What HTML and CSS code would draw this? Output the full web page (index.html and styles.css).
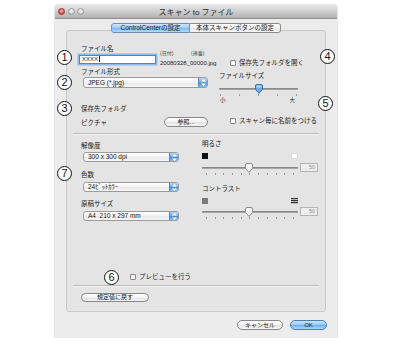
FILE: index.html
```html
<!DOCTYPE html>
<html lang="ja">
<head>
    <meta charset="UTF-8">
    <meta name="viewport" content="width=device-width, initial-scale=1.0">
    <title>スキャン to ファイル</title>
    <link rel="stylesheet" href="styles.css">
</head>
<body>
    <div class="window">
        <div class="titlebar">
            <div class="lights">
                <span class="light red"></span><span class="light"></span><span class="light"></span>
            </div>
            <div class="title">スキャン to ファイル</div>
        </div>

        <div class="tabs">
            <span class="tab selected">ControlCenterの設定</span><span class="tab other">本体スキャンボタンの設定</span>
        </div>

        <div class="group">
            <!-- ファイル名 / 形式 / 保存先 -->
            <div class="sec-top">
                <div class="row-name">
                    <div class="col-name">
                        <div class="label">ファイル名</div>
                        <div class="textfield">XXXX<span class="caret"></span></div>
                    </div>
                    <div class="col-suffix">
                        <div class="hint"><span>(日付)</span><span>(連番)</span></div>
                        <div class="fname">20080328_00000.jpg</div>
                    </div>
                    <div class="check"><span class="box"></span>保存先フォルダを開く</div>
                </div>

                <div class="row-format">
                    <div class="left">
                        <div class="label">ファイル形式</div>
                        <div class="popup wide">
                            <span class="popup-text">JPEG (*.jpg)</span>
                            <span class="popup-arrows"><svg width="5" height="7" viewBox="0 0 5 7"><path d="M2.5 0 L5 2.6 H0 Z M2.5 7 L5 4.4 H0 Z" fill="#fff"/></svg></span>
                        </div>
                    </div>
                    <div class="right">
                        <div class="label">ファイルサイズ</div>
                        <div class="slider">
                            <span class="knob" style="left: 51%"><svg width="9" height="10" viewBox="0 0 9 10"><path d="M1 2 Q1 0.5 2.5 0.5 H6.5 Q8 0.5 8 2 V5.5 L4.5 9.3 L1 5.5 Z" fill="#6ea9ea" stroke="#3e6ea6" stroke-width="1"/><path d="M2 1.5 H7 V3.5 H2 Z" fill="#cfe4fb" opacity="0.8"/></svg></span>
                        </div>
                        <div class="ticks"><span></span><span></span><span></span><span></span><span></span></div>
                        <div class="scale"><span>小</span><span>大</span></div>
                    </div>
                </div>

                <div class="row-folder">
                    <div class="left">
                        <div class="label">保存先フォルダ</div>
                        <div class="pick-row">
                            <span class="label">ピクチャ</span>
                            <span class="btn browse">参照...</span>
                        </div>
                    </div>
                    <div class="right">
                        <div class="check"><span class="box"></span>スキャン毎に名前をつける</div>
                    </div>
                </div>
            </div>

            <div class="sep"></div>

            <!-- 解像度 / 色数 / 原稿サイズ / 明るさ / コントラスト -->
            <div class="sec-mid">
                <div class="left">
                    <div class="label">解像度</div>
                    <div class="popup">
                        <span class="popup-text">300 x 300 dpi</span>
                        <span class="popup-arrows"><svg width="5" height="7" viewBox="0 0 5 7"><path d="M2.5 0 L5 2.6 H0 Z M2.5 7 L5 4.4 H0 Z" fill="#fff"/></svg></span>
                    </div>
                    <div class="label gap-l">色数</div>
                    <div class="popup gap-p">
                        <span class="popup-text">24ﾋﾞｯﾄｶﾗｰ</span>
                        <span class="popup-arrows"><svg width="5" height="7" viewBox="0 0 5 7"><path d="M2.5 0 L5 2.6 H0 Z M2.5 7 L5 4.4 H0 Z" fill="#fff"/></svg></span>
                    </div>
                    <div class="label gap-l2">原稿サイズ</div>
                    <div class="popup gap-p">
                        <span class="popup-text">A4&nbsp; 210 x 297 mm</span>
                        <span class="popup-arrows"><svg width="5" height="7" viewBox="0 0 5 7"><path d="M2.5 0 L5 2.6 H0 Z M2.5 7 L5 4.4 H0 Z" fill="#fff"/></svg></span>
                    </div>
                </div>

                <div class="right">
                    <div class="label">明るさ</div>
                    <div class="swatches"><span class="sw black"></span><span class="sw white"></span></div>
                    <div class="value-row">
                        <div class="slider long">
                            <span class="knob" style="left: 49%"><svg width="9" height="10" viewBox="0 0 9 10"><path d="M1 2 Q1 0.5 2.5 0.5 H6.5 Q8 0.5 8 2 V5.5 L4.5 9.3 L1 5.5 Z" fill="#f6f6f6" stroke="#8a8a8a" stroke-width="1"/></svg></span>
                        </div>
                        <span class="value">50</span>
                    </div>
                    <div class="ticks long"><span></span><span></span><span></span><span></span><span></span><span></span><span></span><span></span><span></span><span></span><span></span></div>

                    <div class="label gap-c">コントラスト</div>
                    <div class="swatches"><span class="sw grey"></span><span class="sw stripes"></span></div>
                    <div class="value-row tight">
                        <div class="slider long">
                            <span class="knob" style="left: 49%"><svg width="9" height="10" viewBox="0 0 9 10"><path d="M1 2 Q1 0.5 2.5 0.5 H6.5 Q8 0.5 8 2 V5.5 L4.5 9.3 L1 5.5 Z" fill="#f6f6f6" stroke="#8a8a8a" stroke-width="1"/></svg></span>
                        </div>
                        <span class="value">50</span>
                    </div>
                    <div class="ticks long"><span></span><span></span><span></span><span></span><span></span><span></span><span></span><span></span><span></span><span></span><span></span></div>
                </div>
            </div>

            <div class="preview">
                <div class="check"><span class="box"></span>プレビューを行う</div>
            </div>

            <div class="sep low"></div>

            <div class="reset-row">
                <span class="btn reset">規定値に戻す</span>
            </div>
        </div>

        <div class="footer">
            <span class="btn cancel">キャンセル</span>
            <span class="btn ok">OK</span>
        </div>
    </div>

    <!-- 説明用の番号 -->
    <span class="mark m1">1</span>
    <span class="mark m2">2</span>
    <span class="mark m3">3</span>
    <span class="mark m4">4</span>
    <span class="mark m5">5</span>
    <span class="mark m6">6</span>
    <span class="mark m7">7</span>
</body>
</html>
```

FILE: styles.css
```css
* {
    box-sizing: border-box;
}

body {
    margin: 0;
    padding: 5px 0 0 55px;
    background: #fff;
    font-family: "Liberation Sans", "Noto Sans CJK JP", sans-serif;
    font-size: 6.5px;
    color: #222;
}

.window {
    width: 282px;
    height: 333px;
    background: #ececec;
    box-shadow: 0 0 2px rgba(0, 0, 0, 0.35);
    border-radius: 3px 3px 0 0;
}

/* タイトルバー */
.titlebar {
    height: 14px;
    display: grid;
    grid-template-columns: 1fr auto 1fr;
    align-items: center;
    padding: 0 3px;
    background: linear-gradient(#e8e8e8, #b2b2b2);
    border-bottom: 1px solid #8e8e8e;
    border-radius: 3px 3px 0 0;
}

.lights {
    display: flex;
    gap: 2.5px;
}

.light {
    width: 7px;
    height: 7px;
    border-radius: 50%;
    border: 1px solid #9c9c9c;
    background: radial-gradient(circle at 50% 35%, #f4f4f4, #c2c2c2);
}

.light.red {
    border-color: #9b2b24;
    background: radial-gradient(circle at 50% 35%, #f6a59d, #cf3a30);
}

.title {
    font-size: 8px;
    color: #2b2b2b;
}

/* タブ */
.tabs {
    display: flex;
    justify-content: center;
    margin-top: 4px;
    position: relative;
    z-index: 1;
}

.tab {
    height: 10px;
    line-height: 8px;
    text-align: center;
    border: 1px solid #8c8c8c;
    background: linear-gradient(#ffffff, #f1f1f1 50%, #e6e6e6 51%, #f7f7f7);
    white-space: nowrap;
}

.tab.selected {
    width: 79px;
    border-radius: 3px 0 0 3px;
    border-color: #6f8fb4;
    background: linear-gradient(#d2e7fc, #9ac9f5 50%, #7db8f0 51%, #b2d9fb);
}

.tab.other {
    width: 91px;
    border-left: none;
    border-radius: 0 3px 3px 0;
}

/* グループボックス */
.group {
    margin: -3px 11px 0;
    height: 282px;
    display: flex;
    flex-direction: column;
    padding: 13px 0 9px;
    background: #e4e4e4;
    border: 1px solid #c8c8c8;
    border-radius: 3px;
}

.label {
    line-height: 9px;
    height: 9px;
    white-space: nowrap;
}

.sec-top {
    padding-left: 14px;
}

.row-name {
    display: flex;
    align-items: flex-start;
}

.col-name {
    width: 79px;
}

.textfield {
    margin: 2px 0 0 -2px;
    width: 77px;
    height: 9px;
    padding-left: 2px;
    font-size: 6px;
    line-height: 7px;
    background: #fff;
    border: 1px solid #7d7d7d;
    box-shadow: 0 0 0 1.5px #8dbaea;
}

.caret {
    display: inline-block;
    width: 1px;
    height: 6px;
    margin-left: 0.5px;
    vertical-align: -1px;
    background: #222;
}

.col-suffix {
    width: 70px;
    padding-top: 6px;
}

.hint {
    display: flex;
    font-size: 5px;
    line-height: 6px;
    color: #444;
}

.hint span {
    width: 31px;
}

.fname {
    margin-top: 3px;
    font-size: 6px;
    line-height: 8px;
    white-space: nowrap;
}

.check {
    display: flex;
    align-items: center;
    gap: 3px;
    line-height: 8px;
    white-space: nowrap;
}

.box {
    width: 6px;
    height: 6px;
    background: #fff;
    border: 1px solid #8a8a8a;
    border-radius: 1px;
    box-shadow: inset 0 1px 1px rgba(0, 0, 0, 0.1);
}

.row-name .check {
    margin-top: 15px;
}

.row-format {
    display: flex;
    height: 37px;
}

.row-format .left,
.row-folder .left {
    width: 127px;
}

.row-format .right {
    margin-left: 11px;
    width: 79px;
    padding-top: 4px;
}

/* ポップアップ */
.popup {
    display: flex;
    margin: 2px 0 0 2px;
    width: 96px;
    height: 10px;
    border: 1px solid #9a9a9a;
    border-radius: 3px;
    overflow: hidden;
    background: linear-gradient(#ffffff, #f3f3f3 50%, #e7e7e7 51%, #f7f7f7);
}

.popup.wide {
    width: 125px;
    height: 11px;
    margin-top: 1px;
}

.popup-text {
    flex: 1;
    padding-left: 4px;
    font-size: 6.5px;
    line-height: 8px;
    white-space: nowrap;
}

.popup.wide .popup-text {
    line-height: 9px;
}

.popup-arrows {
    width: 9px;
    display: flex;
    align-items: center;
    justify-content: center;
    border-left: 1px solid #5a86b8;
    background: linear-gradient(#b6d8f9, #66a5e6 50%, #4289da 51%, #8cc2f4);
}

/* スライダー */
.slider {
    position: relative;
    height: 10px;
    margin-top: 4px;
}

.slider::before {
    content: "";
    position: absolute;
    left: 0;
    right: 0;
    top: 4px;
    height: 2px;
    border-radius: 1px;
    background: #a3a3a3;
    box-shadow: inset 0 1px 0 #888;
}

.knob {
    position: absolute;
    top: 0;
    transform: translateX(-50%);
    line-height: 0;
}

.ticks {
    display: flex;
    justify-content: space-between;
    height: 3px;
    padding: 0 1px;
}

.ticks span {
    width: 1px;
    height: 2px;
    background: #9a9a9a;
}

.scale {
    display: flex;
    justify-content: space-between;
    padding: 0 3px 0 1px;
    font-size: 5.5px;
    line-height: 7px;
}

.row-folder {
    display: flex;
}

.pick-row {
    display: flex;
    justify-content: space-between;
    align-items: center;
    margin-top: 4px;
    height: 10px;
}

.row-folder .right {
    margin-left: 11px;
    padding: 13px 0 0 11px;
}

/* ボタン */
.btn {
    display: block;
    height: 10px;
    line-height: 8px;
    text-align: center;
    font-size: 6px;
    white-space: nowrap;
    border: 1px solid #888;
    border-radius: 5px;
    background: linear-gradient(#ffffff, #f2f2f2 50%, #e3e3e3 51%, #f5f5f5);
}

.btn.browse {
    width: 44px;
}

.sep {
    margin: 6px 6px 0;
    border-top: 1px solid #bababa;
    border-bottom: 1px solid #f4f4f4;
}

.sec-mid {
    display: flex;
    padding-left: 14px;
}

.sec-mid .left {
    width: 98px;
    padding-top: 6px;
}

.gap-l {
    margin-top: 8px;
}

.gap-l2 {
    margin-top: 7px;
}

.popup.gap-p {
    margin-top: 3px;
}

.sec-mid .right {
    margin-left: 23px;
    width: 116px;
    padding-top: 4px;
}

.swatches {
    display: flex;
    justify-content: space-between;
    width: 96px;
    margin-top: 5px;
    height: 6px;
}

.sw {
    width: 6px;
    height: 6px;
}

.sw.black {
    background: #111;
}

.sw.white {
    width: 7px;
    background: #fff;
    border: 1px solid #dcdcdc;
}

.sw.grey {
    background: #7b7b7b;
}

.sw.stripes {
    width: 7px;
    background: repeating-linear-gradient(#333 0 1px, #bbb 1px 2px);
}

.value-row {
    display: flex;
    align-items: center;
    gap: 2px;
    margin-top: 4px;
    height: 9px;
}

.value-row.tight {
    margin-top: 3px;
}

.slider.long {
    width: 96px;
    margin-top: 0;
}

.value {
    width: 18px;
    height: 9px;
    padding-right: 2px;
    text-align: right;
    font-size: 5.5px;
    line-height: 7px;
    color: #8a8a8a;
    background: #eeeeee;
    border: 1px solid #b4b4b4;
}

.ticks.long {
    width: 96px;
    margin-top: 1px;
    padding: 0 4px;
}

.gap-c {
    margin-top: 8px;
}

.preview {
    margin-top: auto;
    padding-left: 63px;
}

.sep.low {
    margin-top: 4px;
}

.reset-row {
    margin-top: 6px;
    padding-left: 14px;
}

.btn.reset {
    width: 68px;
    height: 9px;
    line-height: 7px;
}

/* 下部ボタン */
.footer {
    display: flex;
    justify-content: flex-end;
    gap: 7px;
    padding: 8px 10px 0;
}

.btn.cancel {
    width: 46px;
}

.btn.ok {
    width: 37px;
    border-color: #4d7db6;
    background: linear-gradient(#d0e7fd, #92c6f6 50%, #6aaef0 51%, #acd7fb);
}

/* 番号マーク */
.mark {
    position: absolute;
    width: 15px;
    height: 15px;
    border: 1px solid #111;
    border-radius: 50%;
    background: #fff;
    font-family: "Liberation Sans", sans-serif;
    font-size: 11px;
    line-height: 13px;
    text-align: center;
    color: #111;
}

.m1 { left: 57px; top: 50px; }
.m2 { left: 57px; top: 75px; }
.m3 { left: 57px; top: 101px; }
.m4 { left: 320px; top: 49px; }
.m5 { left: 318px; top: 96px; }
.m6 { left: 104px; top: 270px; }
.m7 { left: 57px; top: 166px; }
```
